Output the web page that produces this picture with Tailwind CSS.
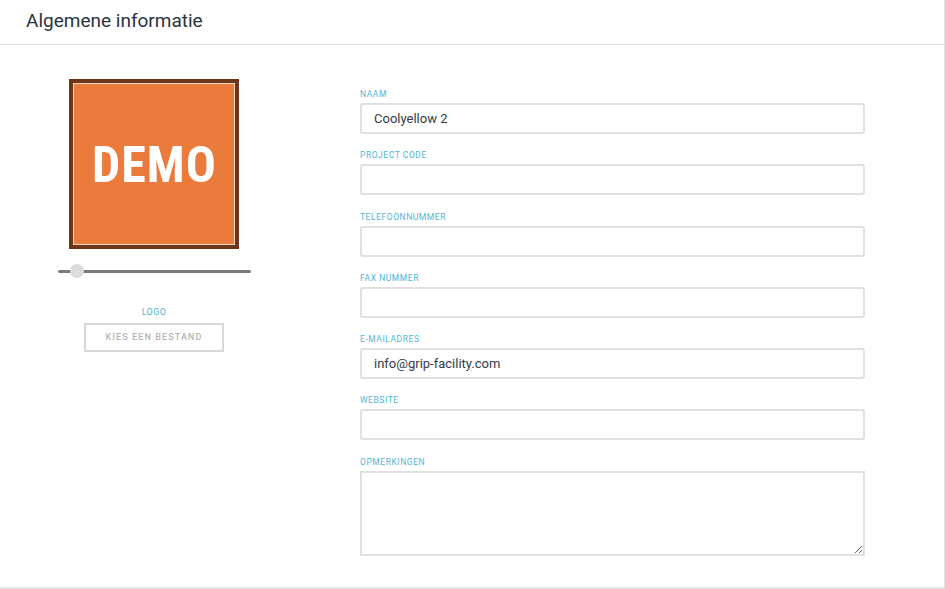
<!DOCTYPE html>
<html>
<head>
<meta charset="utf-8">
<script src="https://cdn.jsdelivr.net/npm/@tailwindcss/browser@4"></script>
</head>
<body class="bg-white font-['Roboto',sans-serif] overflow-hidden">
<div class="w-[945px] h-[589px] flex flex-col border-b-2 border-r border-[#e4e4e4] bg-white">
  <header class="h-[45px] shrink-0 border-b-[1.5px] border-[#e2e2e2] pl-[26px] pt-[9px] text-[19px] leading-[24px] text-[#2b3340]">Algemene informatie</header>
  <main class="flex flex-1">
    <section class="w-[308px] shrink-0 flex flex-col items-center pt-[34px]">
      <div class="w-[170px] h-[170px] border-4 border-[#6e3519] bg-[#eb7b3c]">
        <div class="w-full h-full border border-[#f6d9c6] flex items-center justify-center pt-[2px] pl-[1px]">
          <span class="font-['Roboto_Condensed','Liberation_Sans_Narrow','Roboto',sans-serif] font-bold text-white text-[50px] leading-none tracking-[1px]">DEMO</span>
        </div>
      </div>
      <div class="relative w-[193px] h-[3px] mt-[21px] bg-[#7a7a7a] rounded-full">
        <div class="absolute left-[12px] top-[-6px] w-[14px] h-[14px] rounded-full bg-[#dcdcdc]"></div>
      </div>
      <div class="mt-[34px] text-[9px] leading-[10px] tracking-[0.4px] text-[#4fb6d6]">LOGO</div>
      <button class="mt-[6px] w-[140px] h-[29px] border-2 border-[#d8d8d8] text-[9px] tracking-[1.1px] font-medium text-[#b5b5b5]">KIES EEN BESTAND</button>
    </section>
    <form class="w-[505px] ml-[52px] pt-[43px] flex flex-col">
      <label class="block h-[61.3px]"><span class="block h-[15px] pt-px text-[8.5px] leading-[10px] tracking-[0.55px] text-[#4fb6d6]">NAAM</span><input value="Coolyellow 2" class="w-full h-[31px] rounded-[3px] border-2 border-[#e0e0e0] px-3 pb-[1px] text-[13px] text-[#333b47] outline-none"></label>
      <label class="block h-[61.3px]"><span class="block h-[15px] pt-px text-[8.5px] leading-[10px] tracking-[0.55px] text-[#4fb6d6]">PROJECT CODE</span><input class="w-full h-[31px] rounded-[3px] border-2 border-[#e0e0e0] px-3 text-[13px] outline-none"></label>
      <label class="block h-[61.3px]"><span class="block h-[15px] pt-px text-[8.5px] leading-[10px] tracking-[0.55px] text-[#4fb6d6]">TELEFOONNUMMER</span><input class="w-full h-[31px] rounded-[3px] border-2 border-[#e0e0e0] px-3 text-[13px] outline-none"></label>
      <label class="block h-[61.3px]"><span class="block h-[15px] pt-px text-[8.5px] leading-[10px] tracking-[0.55px] text-[#4fb6d6]">FAX NUMMER</span><input class="w-full h-[31px] rounded-[3px] border-2 border-[#e0e0e0] px-3 text-[13px] outline-none"></label>
      <label class="block h-[61.3px]"><span class="block h-[15px] pt-px text-[8.5px] leading-[10px] tracking-[0.55px] text-[#4fb6d6]">E-MAILADRES</span><input value="info@grip-facility.com" class="w-full h-[31px] rounded-[3px] border-2 border-[#e0e0e0] px-3 pb-[1px] text-[13px] text-[#333b47] outline-none"></label>
      <label class="block h-[61.3px]"><span class="block h-[15px] pt-px text-[8.5px] leading-[10px] tracking-[0.55px] text-[#4fb6d6]">WEBSITE</span><input class="w-full h-[31px] rounded-[3px] border-2 border-[#e0e0e0] px-3 text-[13px] outline-none"></label>
      <label class="block"><span class="block h-[15px] pt-px text-[8.5px] leading-[10px] tracking-[0.55px] text-[#4fb6d6]">OPMERKINGEN</span><textarea class="block w-full h-[85px] border-2 border-[#e0e0e0] px-3 text-[13px] outline-none resize-y"></textarea></label>
    </form>
  </main>
</div>
</body>
</html>
